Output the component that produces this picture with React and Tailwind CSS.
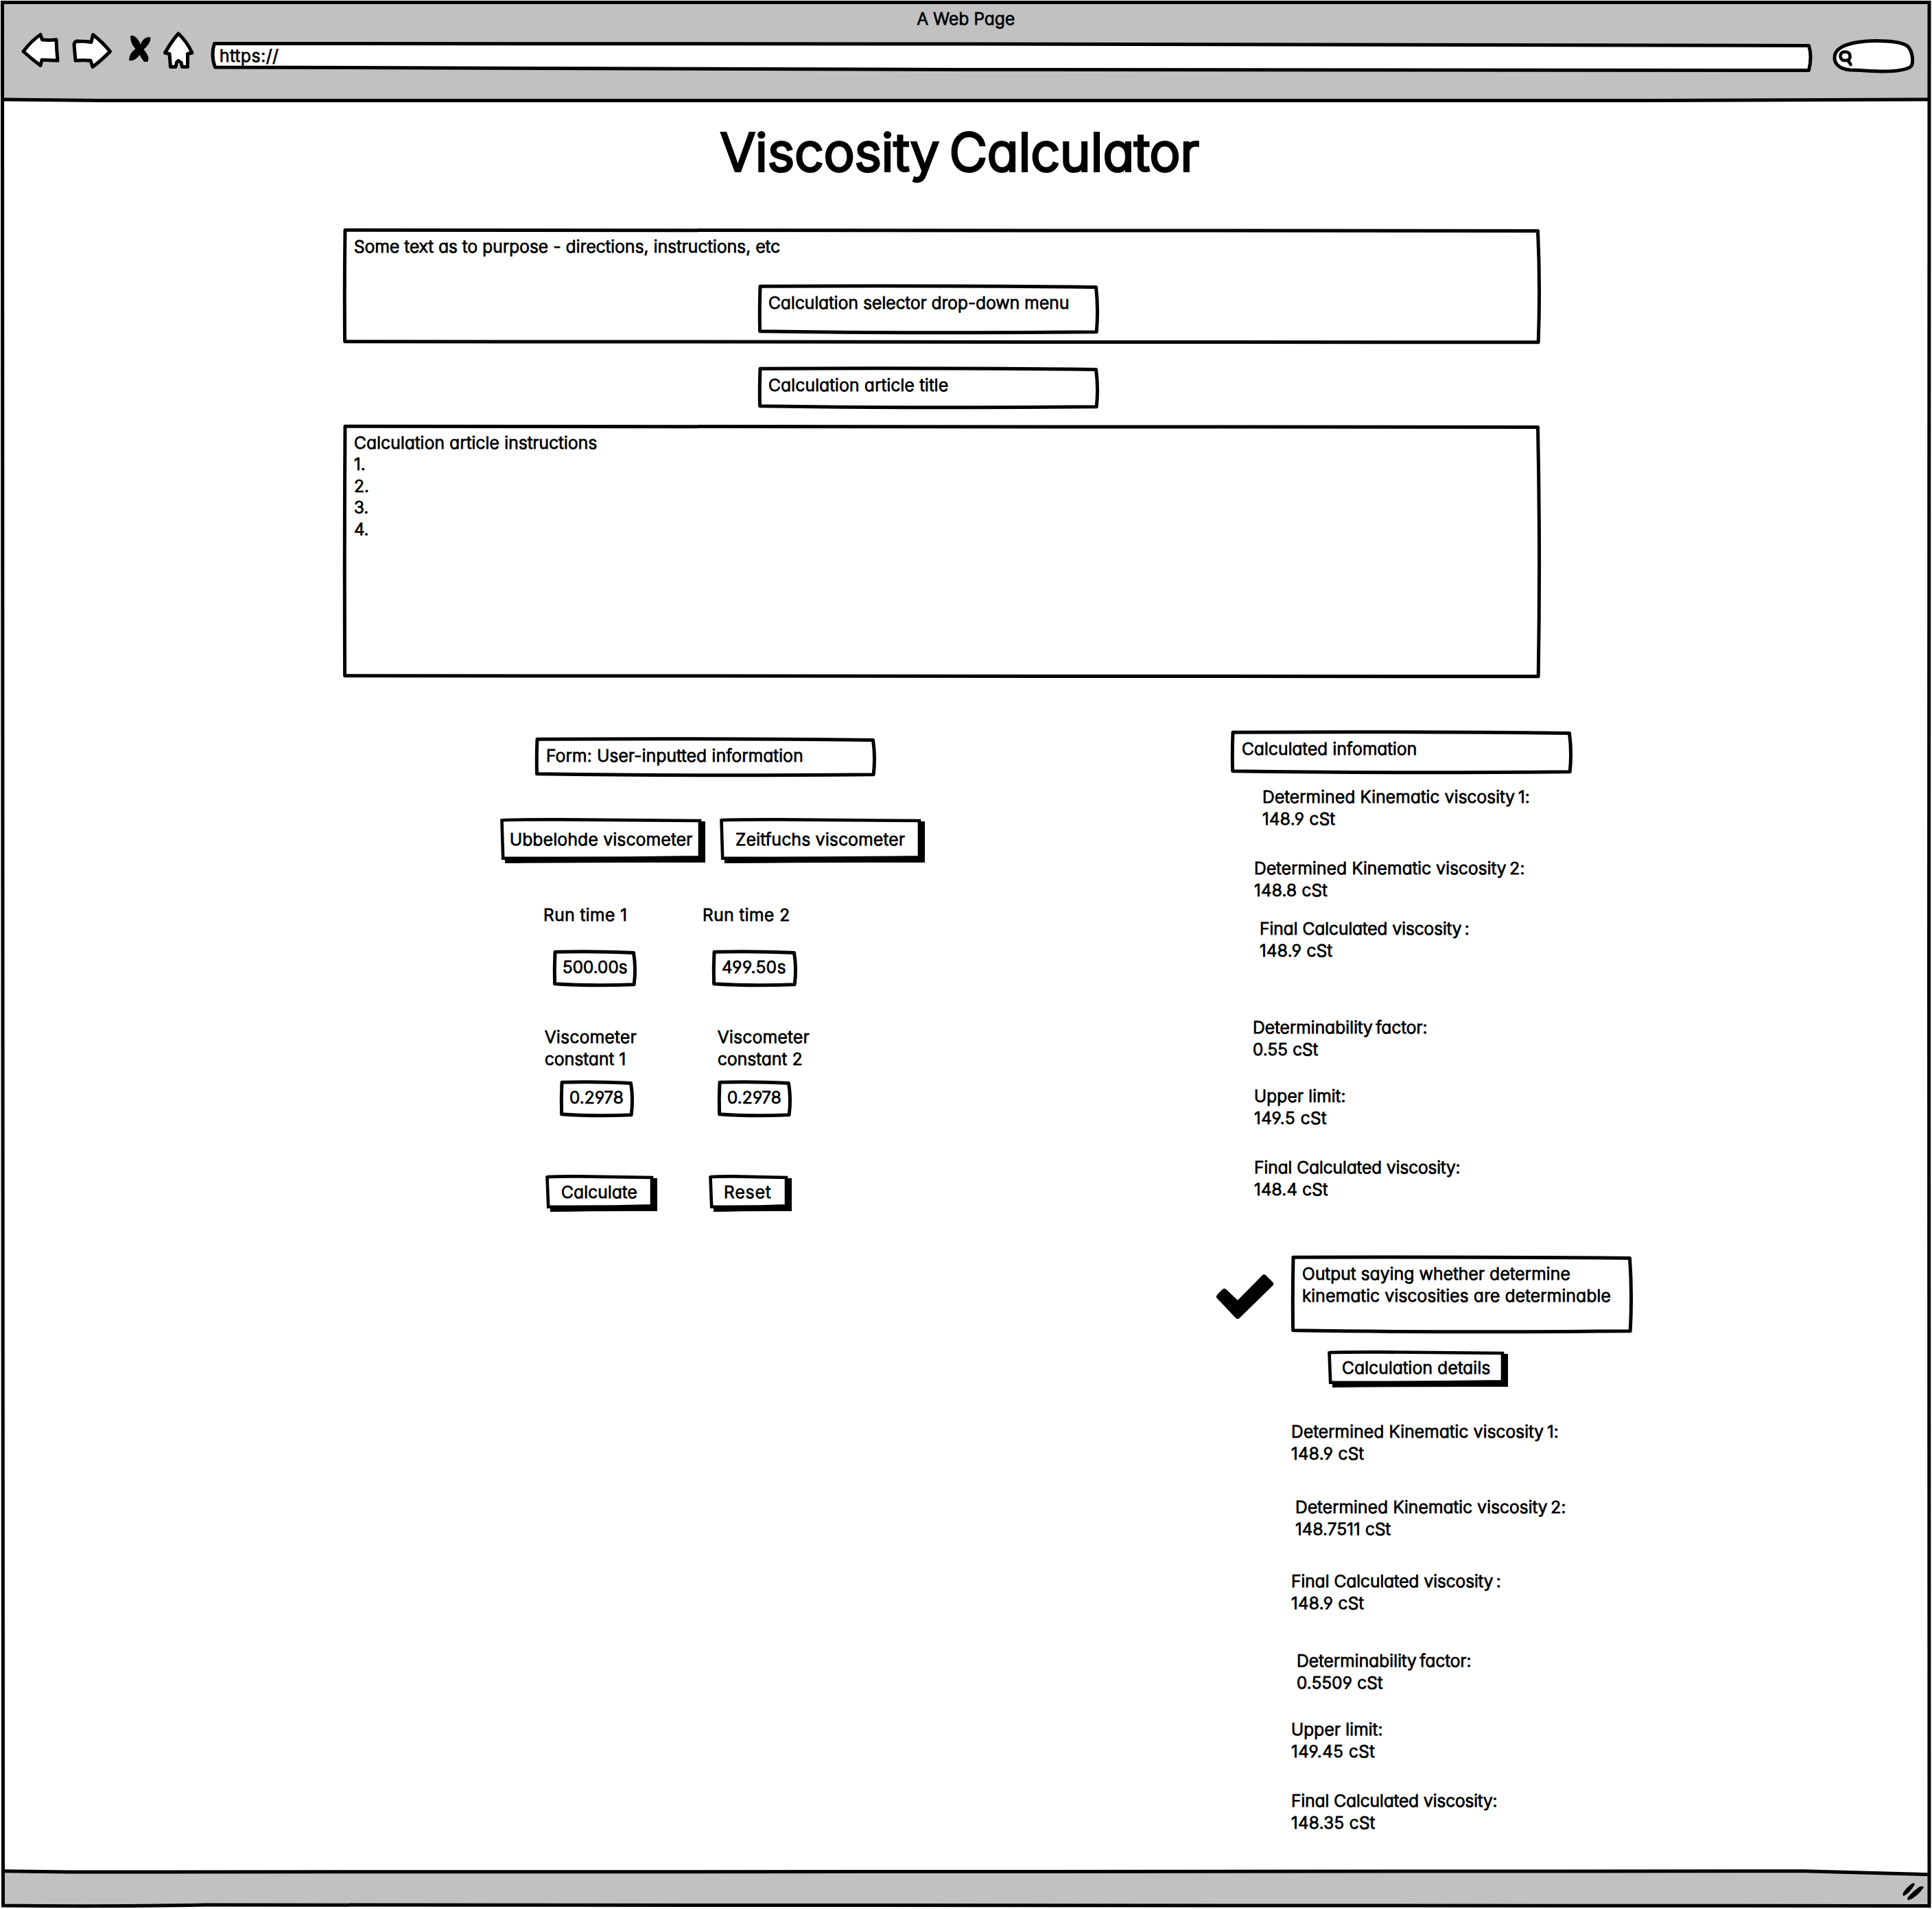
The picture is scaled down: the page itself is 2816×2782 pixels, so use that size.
import React from "react";

function Outline({ w, h }) {
  const d = `M3 3.3 Q${w * 0.45} ${h > 100 ? 2.6 : 1.6} ${w - 4.5} 4.4 Q${w - 0.8} ${h / 2} ${w - 3.8} ${h - 3.2} Q${w * 0.45} ${h - 0.8} 2.6 ${h - 4.2} Q1.8 ${h / 2} 3 3.3 Z`;
  return (
    <svg className="absolute inset-0 overflow-visible" width={w} height={h} aria-hidden="true">
      <path d={d} fill="#fff" stroke="#000" strokeWidth="5" strokeLinejoin="round" />
    </svg>
  );
}

function Box({ w, h, className, children }) {
  return (
    <div className={"relative " + className}>
      <Outline w={w} h={h} />
      <div className="relative">{children}</div>
    </div>
  );
}

function Button({ w, h, className, children }) {
  return (
    <button type="button" className={"relative block pb-[4px] text-left " + className}>
      <svg className="absolute inset-0 overflow-visible" width={w} height={h} aria-hidden="true">
        <path d={`M6.5 6 L${w} 5 L${w} ${h - 1} Q${w / 2} ${h - 1.5} 7 ${h} Z`} fill="#000" />
        <path
          d={`M2.5 3.4 Q7 2.2 ${w * 0.3} 2.4 L${w - 8} 4 L${w - 8} ${h - 8.8} Q${w * 0.5} ${h - 6.6} 4.2 ${h - 7.4} Z`}
          fill="#fff"
          stroke="#000"
          strokeWidth="4.6"
        />
      </svg>
      <span className="relative block">{children}</span>
    </button>
  );
}

function T({ c = "", children }) {
  return <span className={"block w-max whitespace-pre " + c}>{children}</span>;
}

/* A label whose last word follows a "y" and sits closer to it. */
function Tail({ children }) {
  return <span className="[word-spacing:-2.5px]">{children}</span>;
}

function Reading({ className, label, tail, value, lc, vc }) {
  return (
    <div className={className}>
      <T c={lc}>
        {label}
        {tail && <Tail>{" " + tail}</Tail>}
      </T>
      <T c={vc}>{value}</T>
    </div>
  );
}

export default function App() {
  return (
    <div className="relative flex h-[2782px] w-[2816px] flex-col bg-white font-['Inter',sans-serif] text-[24.5px] leading-[32px] font-light text-black [-webkit-text-stroke:1.2px_black] [font-feature-settings:'cv11','cv04','cv03']">
      <svg className="absolute inset-0" width="2816" height="2782" aria-hidden="true">
        <path d="M4 4 H2811 V145 H4 Z" fill="#c1c1c1" />
        <path d="M4 2727 L140 2728 L2630 2727 L2811 2732 V2778 H4 Z" fill="#c1c1c1" />
        <g fill="none" stroke="#000" strokeWidth="5">
          <path d="M3.5 3.5 L2812 3.5 L2811.5 1400 L2812 2777.5 Q1400 2779 300 2776 Q150 2779 4.5 2777 L4 1400 Z" />
          <path d="M4 145 L150 146.6 H2400 L2811 145" />
          <path d="M4 2726.7 L100 2728 L1400 2727.5 L2630 2726.7 L2811 2731.7" />
        </g>
        <path d="M2787.500 2744.500 Q2778 2751 2773.500 2759 L2774 2763.300 Q2783 2760 2791 2746 L2789.500 2744.300 Z" />
        <path d="M2799 2749 Q2788 2755.500 2780 2766 L2781 2769.500 Q2793 2766 2804 2750.500 L2803 2749 Z" />
      </svg>

      <header className="relative h-[146px]">
        <div className="flex justify-center pt-[11px]"><T c="tracking-[0.24px]">A Web Page</T></div>
        <svg className="absolute top-0 left-0" width="2816" height="146" aria-hidden="true">
          <g fill="#fff" stroke="#000" strokeWidth="5" strokeLinejoin="round">
            <path d="M34 75 Q46 59 59 50.500 L61.500 58 Q74 59 82 57.700 Q82.500 73 84 88.200 L61 87.300 L59 95.500 Q45 85 34 75 Z" />
            <path d="M112 60 Q124 60 133 61.500 L135.500 50.500 Q150 62 160.500 75 Q148 88 135 97.500 L132 88.300 Q121 87 110 88.300 L108 65 Q108.500 61 112 60 Z" />
            <path d="M260 49 Q250 60 240.500 77 L247 78.500 L248.500 97.500 H256 L257.500 91 L260 88.500 L264 91 L265.500 97.500 H273.500 L273.500 78.500 L280 77 Q272 60 260 49 Z" />
            <path d="M312.500 63.500 L1400 64 L2636.500 66.500 Q2641.500 82 2636.500 102.500 L1400 101.500 L640 99 L313.500 98 Q307 80 312.500 63.500 Z" />
            <path d="M2674 83 C2675 67 2700 60 2733 59.500 C2757 59.500 2773 62 2780 67 C2788 74 2789 90 2786 96 C2782 101 2765 104 2746 104 C2730 104 2710 102 2697 102 C2683 101 2673 94 2674 83 Z" />
          </g>
          <path d="M190 53 Q191 51 194.500 52 Q202 56 204.500 64.500 Q209 55 216 54 L219.500 54.500 Q220 63 209.500 72 Q216 80 216.500 85 L215.500 90 L210 90 Q206 85 203.500 80 Q199 87 191 88.500 L188 88 Q188 78 197.500 71 Q190 64 190 53 Z" />
          <g fill="none" stroke="#000" strokeWidth="4.600" strokeLinecap="round">
            <path d="M2689 75.500 C2684 75.500 2682 79 2682.500 82.500 C2683 87 2686 88.500 2690 88 C2695 88 2697 85 2696.500 81 C2696 77 2693 75.500 2689 75.500 Z" />
            <path d="M2693.500 88 L2697.500 94" />
          </g>
        </svg>
        <div className="relative mt-[22px] ml-[320px]"><T c="tracking-[0.85px]">https://</T></div>
      </header>

      <main className="relative flex-1">
        <h1 className="pt-[36px] pl-[1050px] text-[75.5px] leading-[80px] tracking-[0.25px] [word-spacing:-7px] [-webkit-text-stroke:4px_black]">
          <T>Viscosity Calculator</T>
        </h1>

        <Box w={1746} h={170} className="mt-[70px] ml-[500px] h-[170px] w-[1746px] pt-[11px] pl-[16px]">
          <T c="tracking-[0.23px]">Some text as to purpose - directions, instructions, etc</T>
          <Box w={497} h={73} className="mt-[39px] ml-[589px] h-[73px] w-[497px] pt-[11px] pl-[15px]">
            <T c="tracking-[0.2px]">Calculation selector drop-down menu</T>
          </Box>
        </Box>

        <Box w={497} h={62} className="mt-[32px] ml-[1105px] h-[62px] w-[497px] pt-[11px] pl-[15px]">
          <T c="tracking-[0.36px]">Calculation article title</T>
        </Box>

        <Box w={1746} h={371} className="mt-[22px] ml-[500px] h-[371px] w-[1746px] pt-[12px] pl-[16px] leading-[31.4px]">
          <T c="tracking-[0.3px]">Calculation article instructions</T>
          <ol>
            <li>1.</li>
            <li>2.</li>
            <li>3.</li>
            <li>4.</li>
          </ol>
        </Box>

        <div className="flex">
          <section className="w-[1740px] pt-[85px] pl-[729px]">
            <Box w={497} h={58} className="ml-[51px] h-[58px] w-[497px] pt-[11px] pl-[16px]">
              <T c="tracking-[0.33px]">Form: User-inputted information</T>
            </Box>
            <div className="mt-[60px] flex gap-[21px]">
              <Button w={299} h={66} className="h-[66px] w-[299px] pl-[14px]"><T c="tracking-[0.42px]">Ubbelohde viscometer</T></Button>
              <Button w={299} h={66} className="h-[66px] w-[299px] pl-[23px]"><T c="tracking-[0.44px]">Zeitfuchs viscometer</T></Button>
            </div>
            <div className="mt-[59px] ml-[63px] flex">
              <div className="w-[232px]"><T c="tracking-[0.61px]">Run time 1</T></div>
              <T c="tracking-[0.62px]">Run time 2</T>
            </div>
            <div className="mt-[35px] ml-[77px] flex">
              <Box w={122} h={54} className="h-[54px] w-[122px] pt-[9px] pl-[14px]"><T c="tracking-[0.16px]">500.00s</T></Box>
              <Box w={124} h={54} className="ml-[110px] h-[54px] w-[124px] pt-[9px] pl-[14px]"><T c="tracking-[0.66px]">499.50s</T></Box>
            </div>
            <div className="mt-[57px] ml-[65px] flex">
              <div className="w-[252px]"><T c="tracking-[0.52px]">Viscometer</T><T c="tracking-[0.31px]">constant 1</T></div>
              <div><T c="tracking-[0.52px]">Viscometer</T><T c="tracking-[0.32px]">constant 2</T></div>
            </div>
            <div className="mt-[15px] ml-[87px] flex gap-[122px]">
              <Box w={108} h={54} className="h-[54px] w-[108px] pt-[9px] pl-[14px]"><T c="tracking-[0.17px]">0.2978</T></Box>
              <Box w={108} h={54} className="h-[54px] w-[108px] pt-[9px] pl-[14px]"><T c="tracking-[0.17px]">0.2978</T></Box>
            </div>
            <div className="mt-[84px] ml-[66px] flex gap-[75px]">
              <Button w={163} h={54} className="h-[54px] w-[163px] pl-[23px]"><T c="tracking-[0.31px]">Calculate</T></Button>
              <Button w={121} h={54} className="h-[54px] w-[121px] pl-[22px]"><T c="tracking-[1.2px]">Reset</T></Button>
            </div>
          </section>

          <section className="pt-[75px]">
            <Box w={498} h={64} className="ml-[54px] h-[64px] w-[498px] pt-[11px] pl-[16px]">
              <T c="tracking-[0.24px]">Calculated infomation</T>
            </Box>
            <Reading className="mt-[17px] ml-[100px]" lc="tracking-[0.28px]" label="Determined Kinematic viscosity" tail="1:" vc="tracking-[0.4px]" value="148.9 cSt" />
            <Reading className="mt-[40px] ml-[88px]" lc="tracking-[0.26px]" label="Determined Kinematic viscosity" tail="2:" vc="tracking-[0.31px]" value="148.8 cSt" />
            <Reading className="mt-[24px] ml-[96px]" lc="tracking-[0.1px]" label="Final Calculated viscosity" tail=":" vc="tracking-[0.4px]" value="148.9 cSt" />
            <Reading className="mt-[80px] ml-[86px]" lc="tracking-[0.21px]" label="Determinability" tail="factor:" vc="tracking-[0.23px]" value="0.55 cSt" />
            <Reading className="mt-[36px] ml-[88px]" lc="tracking-[0.29px]" label="Upper limit:" vc="tracking-[0.61px]" value="149.5 cSt" />
            <Reading className="mt-[40px] ml-[88px]" lc="tracking-[0.07px]" label="Final Calculated viscosity:" vc="tracking-[0.26px]" value="148.4 cSt" />
            <div className="mt-[80px] ml-[32px] flex">
              <svg className="mt-[28px]" width="86" height="68" aria-hidden="true">
                <path d="M5 32.500 L12.500 25 L32 43.500 L70.500 4.500 L80 14 L32 61 Z" stroke="#000" strokeWidth="8" strokeLinejoin="round" />
              </svg>
              <Box w={498} h={114} className="ml-[24px] h-[114px] w-[498px] pt-[11px] pl-[16px]">
                <T c="tracking-[0.3px]">Output saying whether determine</T>
                <T c="tracking-[0.35px]">kinematic viscosities are determinable</T>
              </Box>
            </div>
            <Button w={263} h={54} className="mt-[25px] ml-[195px] h-[54px] w-[263px] pl-[21px]"><T c="tracking-[0.3px]">Calculation details</T></Button>
            <Reading className="mt-[48px] ml-[142px]" lc="tracking-[0.28px]" label="Determined Kinematic viscosity" tail="1:" vc="tracking-[0.4px]" value="148.9 cSt" />
            <Reading className="mt-[46px] ml-[148px]" lc="tracking-[0.26px]" label="Determined Kinematic viscosity" tail="2:" vc="tracking-[0.2px]" value="148.7511 cSt" />
            <Reading className="mt-[44px] ml-[142px]" lc="tracking-[0.1px]" label="Final Calculated viscosity" tail=":" vc="tracking-[0.4px]" value="148.9 cSt" />
            <Reading className="mt-[52px] ml-[150px]" lc="tracking-[0.21px]" label="Determinability" tail="factor:" vc="tracking-[0.28px]" value="0.5509 cSt" />
            <Reading className="mt-[36px] ml-[142px]" lc="tracking-[0.29px]" label="Upper limit:" vc="tracking-[0.6px]" value="149.45 cSt" />
            <Reading className="mt-[40px] ml-[142px]" lc="tracking-[0.07px]" label="Final Calculated viscosity:" vc="tracking-[0.4px]" value="148.35 cSt" />
          </section>
        </div>
      </main>
    </div>
  );
}
